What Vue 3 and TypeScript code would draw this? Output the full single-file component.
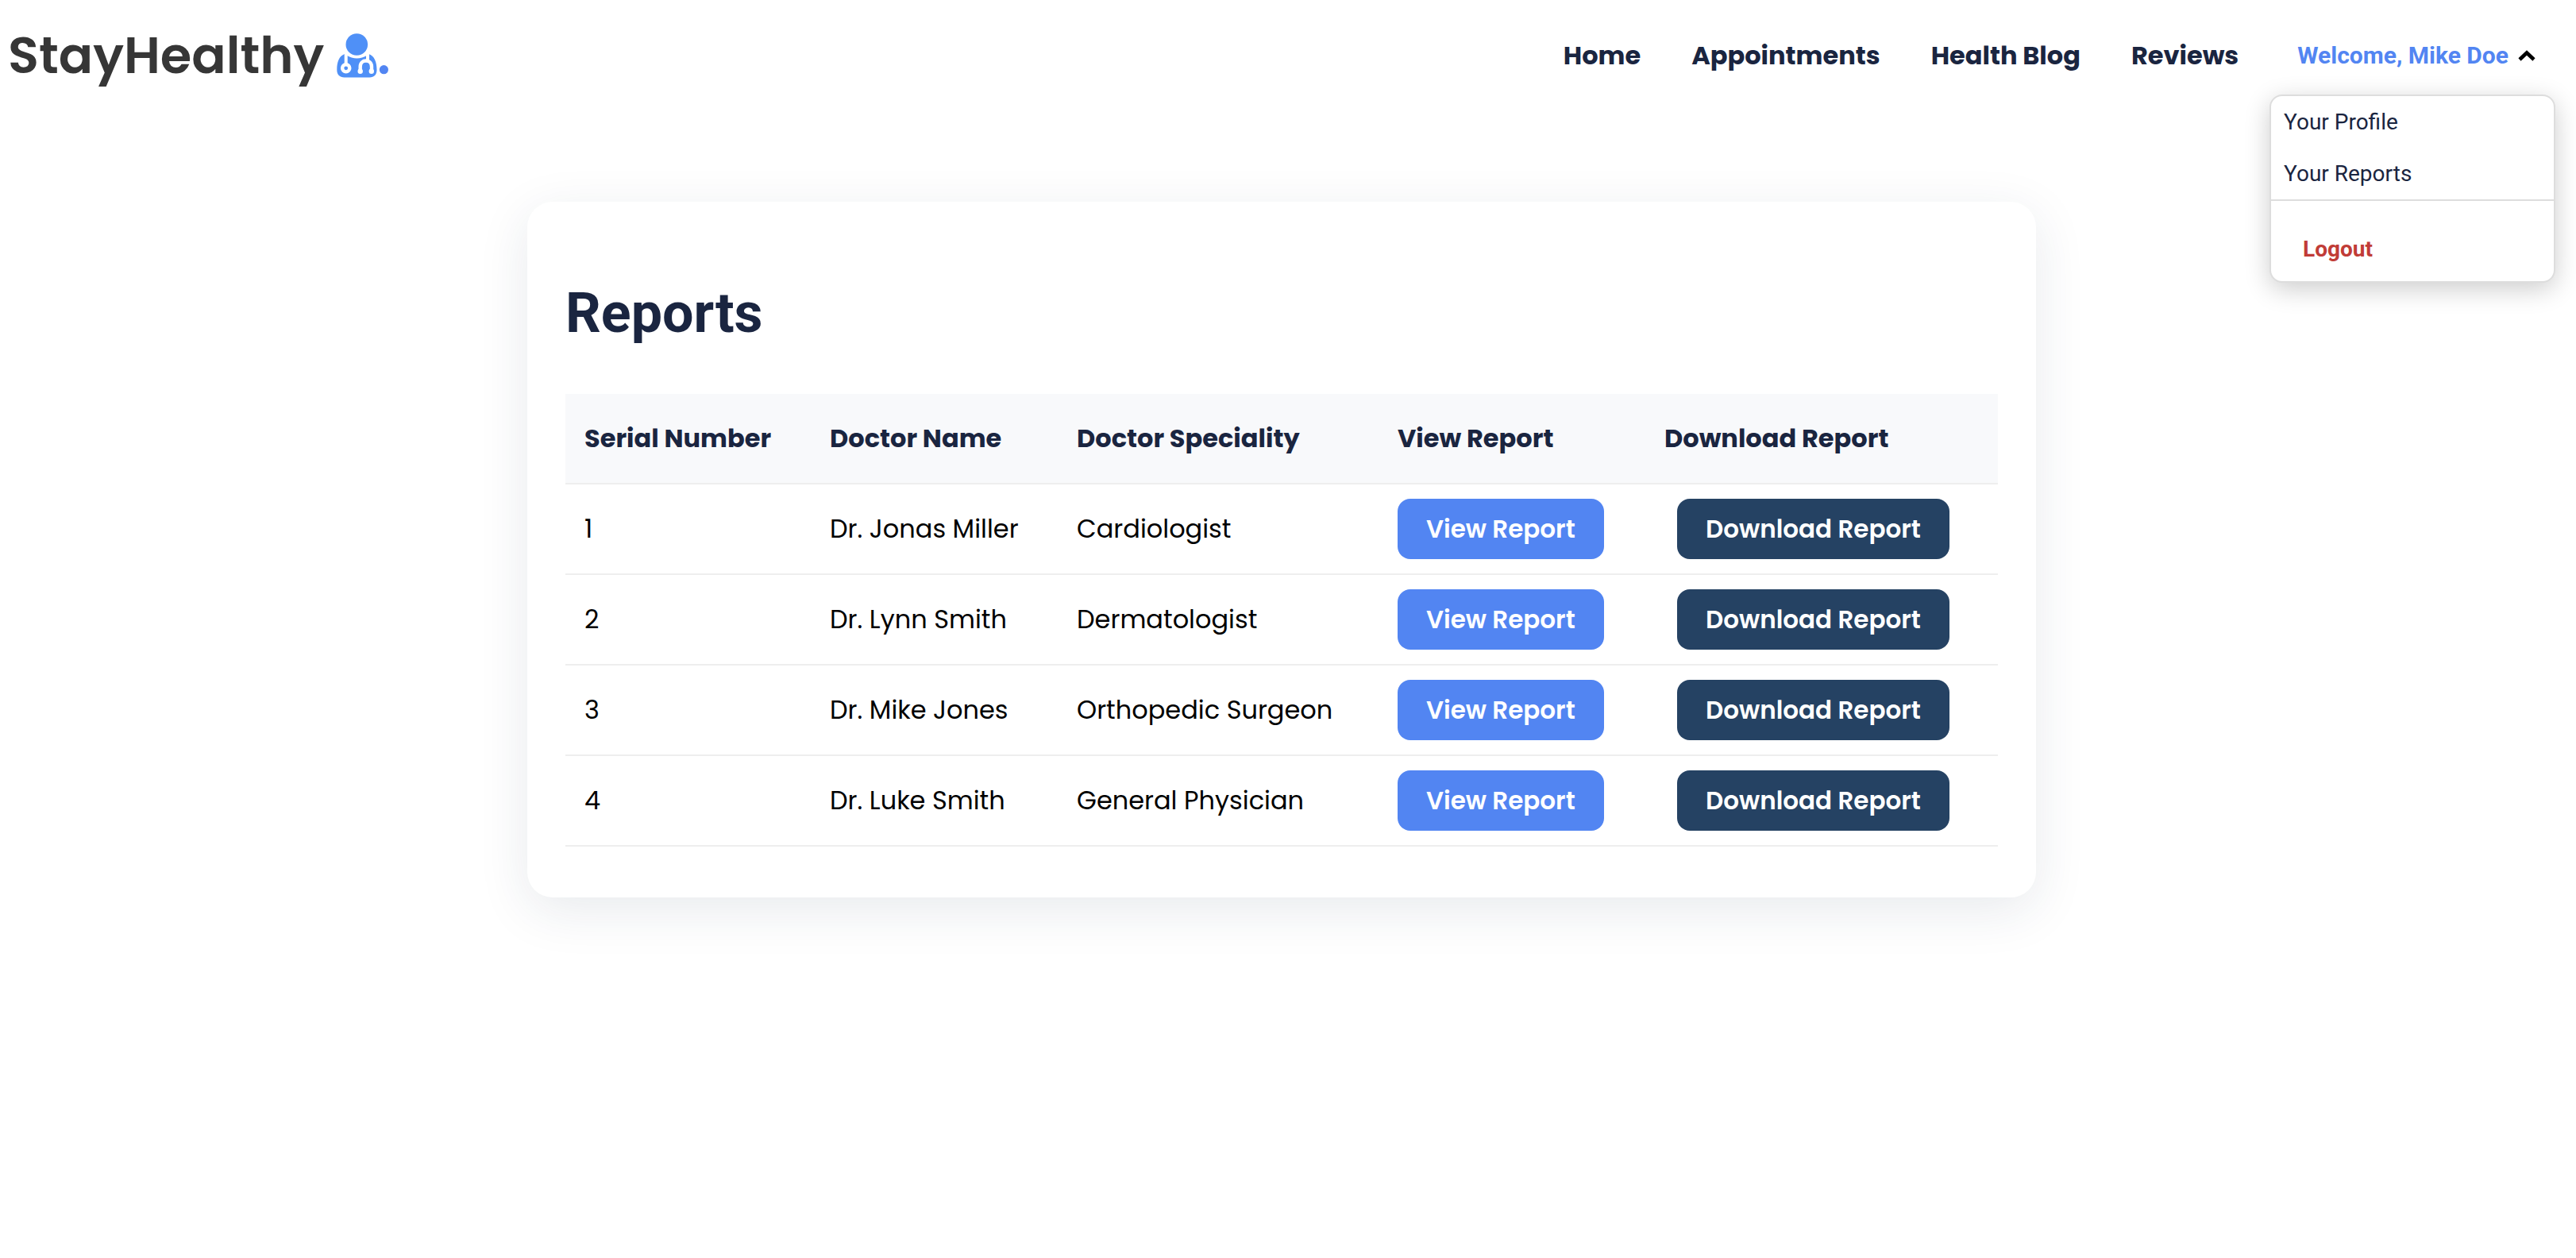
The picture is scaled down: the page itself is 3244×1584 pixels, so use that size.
<script setup lang="ts">
import { ref } from 'vue'

interface Report {
  id: number
  doctor: string
  speciality: string
}

const navLinks: string[] = ['Home', 'Appointments', 'Health Blog', 'Reviews']

const reports: Report[] = [
  { id: 1, doctor: 'Dr. Jonas Miller', speciality: 'Cardiologist' },
  { id: 2, doctor: 'Dr. Lynn Smith', speciality: 'Dermatologist' },
  { id: 3, doctor: 'Dr. Mike Jones', speciality: 'Orthopedic Surgeon' },
  { id: 4, doctor: 'Dr. Luke Smith', speciality: 'General Physician' },
]

const menuOpen = ref(true)
</script>

<template>
  <div class="page">
    <header class="navbar">
      <a class="brand" href="#">
        <span class="brand-name">StayHealthy</span>
        <svg class="brand-icon" viewBox="0 0 66 56" aria-hidden="true">
          <circle cx="25.3" cy="14" r="13.8" fill="#4f90f7" />
          <path
            d="M10 26 C15 30.500 35.500 30.500 40.500 26 C47.500 28.500 50.500 36 50.500 46 C50.500 52 47 55.500 41.500 55.500 H9.500 C4 55.500 0.300 52 0.300 46 C0.300 36 3 28.500 10 26 Z"
            fill="#4f90f7"
          />
          <path d="M11.700 24 V38" fill="none" stroke="#fff" stroke-width="4" />
          <path d="M13 26.300 Q25.300 34 38 26.300" fill="none" stroke="#fff" stroke-width="2.600" />
          <circle cx="11.700" cy="43.800" r="4.600" fill="none" stroke="#fff" stroke-width="4.400" />
          <path d="M39 24 V34" fill="none" stroke="#fff" stroke-width="4" />
          <path d="M29.700 48 V42 C29.700 32 44 32 44 42 V48" fill="none" stroke="#fff" stroke-width="4.400" />
          <circle cx="29.700" cy="47.800" r="3.200" fill="#fff" />
          <circle cx="43.800" cy="47.800" r="3.200" fill="#fff" />
          <circle cx="59.400" cy="45.700" r="5.600" fill="#5285f2" />
        </svg>
      </a>

      <nav class="links">
        <a v-for="link in navLinks" :key="link" class="link" href="#">{{ link }}</a>
        <div class="account">
          <button class="account-toggle" type="button" :aria-expanded="menuOpen" @click="menuOpen = !menuOpen">
            <span>Welcome, Mike Doe</span>
            <svg class="chevron" viewBox="0 0 22 14" aria-hidden="true">
              <path d="M2 12 L11 3.500 L20 12" fill="none" stroke="#000" stroke-width="4.600" />
            </svg>
          </button>
          <div v-if="menuOpen" class="menu">
            <a class="menu-item" href="#">Your Profile</a>
            <a class="menu-item" href="#">Your Reports</a>
            <div class="menu-footer">
              <button class="logout" type="button">Logout</button>
            </div>
          </div>
        </div>
      </nav>
    </header>

    <main class="card">
      <h1 class="title">Reports</h1>
      <table class="reports">
        <colgroup>
          <col class="col-serial" />
          <col class="col-name" />
          <col class="col-speciality" />
          <col class="col-view" />
          <col />
        </colgroup>
        <thead>
          <tr>
            <th scope="col">Serial Number</th>
            <th scope="col">Doctor Name</th>
            <th scope="col">Doctor Speciality</th>
            <th scope="col">View Report</th>
            <th scope="col">Download Report</th>
          </tr>
        </thead>
        <tbody>
          <tr v-for="report in reports" :key="report.id">
            <td>{{ report.id }}</td>
            <td>{{ report.doctor }}</td>
            <td>{{ report.speciality }}</td>
            <td><button class="btn btn-view" type="button">View Report</button></td>
            <td><button class="btn btn-download" type="button">Download Report</button></td>
          </tr>
        </tbody>
      </table>
    </main>
  </div>
</template>

<style>
body {
  margin: 0;
  background: #fff;
}
</style>

<style scoped>
.page {
  box-sizing: border-box;
  min-height: 100vh;
  padding: 0 16px 96px 0;
  font-family: Poppins, Inter, sans-serif;
  font-size: 32px;
  color: #000;
}

.navbar {
  display: flex;
  align-items: center;
  justify-content: space-between;
  height: 140px;
  padding: 0 35px 0 10px;
}

.brand {
  display: flex;
  align-items: center;
  gap: 16px;
  text-decoration: none;
}

.brand-name {
  font-size: 64px;
  font-weight: 600;
  line-height: 96px;
  color: #363636;
}

.brand-icon {
  width: 66px;
  height: 56px;
}

.links {
  display: flex;
  align-items: center;
  gap: 64px;
}

.link {
  font-weight: 700;
  line-height: 48px;
  color: #1a2540;
  text-decoration: none;
}

.account {
  position: relative;
  margin-left: 10px;
}

.account-toggle {
  display: flex;
  align-items: center;
  gap: 12px;
  padding: 0;
  border: 0;
  background: none;
  font-family: Roboto, sans-serif;
  font-size: 30px;
  font-weight: 700;
  line-height: 48px;
  color: #5285f2;
  cursor: pointer;
}

.chevron {
  width: 22px;
  height: 14px;
}

.menu {
  position: absolute;
  top: 73px;
  right: -25px;
  box-sizing: border-box;
  width: 360px;
  border: 2px solid #ddd;
  border-radius: 16px;
  background: #fff;
  box-shadow: 0 8px 32px rgba(0, 0, 0, 0.2);
  font-family: Roboto, sans-serif;
  font-size: 28px;
}

.menu-item {
  display: block;
  padding: 16px;
  line-height: 33px;
  color: #1a2540;
  text-decoration: none;
}

.menu-footer {
  padding: 24px 16px 3px;
  border-top: 2px solid #ddd;
}

.logout {
  display: block;
  padding: 19px 24px;
  border: 0;
  background: none;
  font-family: Roboto, sans-serif;
  font-size: 28px;
  font-weight: 700;
  line-height: 36px;
  color: #c13c37;
  cursor: pointer;
}

.card {
  box-sizing: border-box;
  max-width: 1900px;
  margin: 114px auto 0;
  padding: 98px 48px 64px;
  border-radius: 32px;
  background: #fff;
  box-shadow: 0 16px 64px rgba(26, 52, 80, 0.1);
}

.title {
  margin: 0 0 60px;
  font-family: Roboto, sans-serif;
  font-size: 70px;
  font-weight: 700;
  line-height: 84px;
  color: #1a2540;
}

.reports {
  width: 100%;
  border-spacing: 0;
  table-layout: fixed;
}

.col-serial {
  width: 309px;
}

.col-name {
  width: 311px;
}

.col-speciality {
  width: 404px;
}

.col-view {
  width: 336px;
}

.reports th,
.reports td {
  height: 112px;
  padding: 0 24px;
  border-bottom: 2px solid #eee;
  text-align: left;
  line-height: 48px;
}

.reports th {
  background: #f8f9fb;
  font-weight: 700;
  color: #1a2540;
}

.btn {
  display: block;
  height: 76px;
  padding: 0 36px;
  border: 0;
  border-radius: 16px;
  font-family: inherit;
  font-size: 31px;
  font-weight: 600;
  color: #fff;
  white-space: nowrap;
  cursor: pointer;
}

.btn-view {
  background: #5285f2;
}

.btn-download {
  margin-left: 16px;
  background: #254263;
}
</style>
